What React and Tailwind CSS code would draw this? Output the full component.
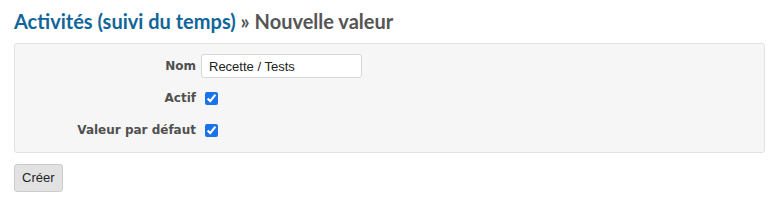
export default function App() {
  return (
    <div className="w-[779px] h-[212px] bg-white px-[14px] pt-[8px] font-['DejaVu_Sans',sans-serif] text-[#333]">
      <h2 className="text-[20px] font-bold leading-[26px] text-[#555] font-['Lato',sans-serif]">
        <a className="text-[#116699]">Activités (suivi du temps)</a> » Nouvelle valeur
      </h2>

      <div className="mt-[9px] h-[110px] bg-[#f6f6f6] border border-[#e2e2e2] rounded-[3px] pt-[10px]">
        <div className="flex items-center h-[24px]">
          <label className="w-[181px] text-right text-[12px] font-bold text-[#505050]">Nom</label>
          <input
            type="text"
            defaultValue="Recette / Tests"
            className="ml-[5px] w-[161px] h-[24px] bg-white border border-[#d7d7d7] rounded-[3px] px-[7px] font-['Liberation_Sans',sans-serif] text-[13px] text-[#222] outline-none"
          />
        </div>
        <div className="flex items-center h-[24px] mt-[8px]">
          <label className="w-[181px] text-right text-[12px] font-bold text-[#505050]">Actif</label>
          <input type="checkbox" defaultChecked className="ml-[9px] w-[13px] h-[13px] accent-[#1a73e8]" />
        </div>
        <div className="flex items-center h-[24px] mt-[8px]">
          <label className="w-[181px] text-right text-[12px] font-bold text-[#505050]">Valeur par défaut</label>
          <input type="checkbox" defaultChecked className="ml-[9px] w-[13px] h-[13px] accent-[#1a73e8]" />
        </div>
      </div>

      <button className="mt-[11px] h-[28px] px-[7px] bg-[#e2e2e2] border border-[#cccccc] rounded-[3px] font-['Liberation_Sans',sans-serif] text-[13px] text-[#222]">
        Créer
      </button>
    </div>
  );
}
